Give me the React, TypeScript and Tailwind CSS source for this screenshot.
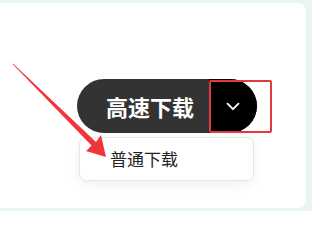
export default function App() {
  return (
    <div
      className="relative w-[312px] h-[211px] bg-[#e7f6f0] pt-[3px] pb-[3px] pr-[6px]"
      style={{ fontFamily: '"Noto Sans CJK SC", "Noto Sans", sans-serif' }}
    >
      <div className="h-full bg-white rounded-r-[8px] pt-[76px] pl-[77px]">
        <div className="relative w-[180px]">
          <div className="flex h-[54px] w-[180px] rounded-full bg-[#333333] overflow-hidden">
            <div className="flex-1 flex items-center pl-[29px] text-white text-[22px] font-bold">
              高速下载
            </div>
            <div className="w-[48px] flex items-center justify-center bg-black">
              <svg width="22" height="22" viewBox="0 0 24 24" fill="none" stroke="white" strokeWidth="2" strokeLinecap="round" strokeLinejoin="round">
                <path d="M6 9.5l6 6 6-6" />
              </svg>
            </div>
          </div>
          <div className="absolute left-[132px] top-[1px] w-[63px] h-[53px] border-2 border-[#e0393e] rounded-[2px]" />
        </div>
        <div className="mt-[4px] ml-[2px] w-[175px] h-[44px] flex items-center pl-[30px] border border-[#e6e6e6] rounded-[7px] shadow-[0_4px_12px_rgba(0,0,0,0.06)] text-[17px] text-[#222]">
          普通下载
        </div>
      </div>
      <svg className="absolute inset-0 pointer-events-none" width="312" height="211" viewBox="0 0 312 211">
        <polygon
          points="13,63.5 96,142 101,135 106,157 86,151 91.5,145.5 12.5,64"
          fill="#f0363a"
        />
      </svg>
    </div>
  );
}
